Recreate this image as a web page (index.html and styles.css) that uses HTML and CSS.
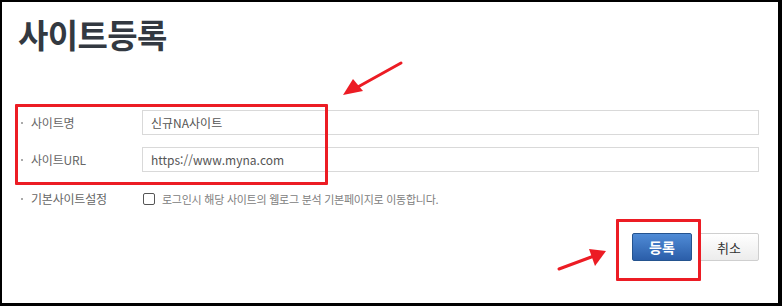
FILE: index.html
```html
<!DOCTYPE html>
<html lang="ko">
<head>
<meta charset="utf-8">
<title>사이트등록</title>
<link rel="stylesheet" href="styles.css">
</head>
<body>
<div class="frame">
  <h1 class="title">사이트등록</h1>
  <div class="form">
    <div class="row">
      <div class="label"><span class="dot"></span>사이트명</div>
      <div class="field"><div class="input">신규NA사이트</div></div>
    </div>
    <div class="row">
      <div class="label"><span class="dot"></span>사이트URL</div>
      <div class="field"><div class="input">https://www.myna.com</div></div>
    </div>
    <div class="row row-check">
      <div class="label"><span class="dot"></span>기본사이트설정</div>
      <div class="field check-field"><span class="checkbox"></span><span class="check-text">로그인시 해당 사이트의 웹로그 분석 기본페이지로 이동합니다.</span></div>
    </div>
  </div>
  <div class="actions">
    <button class="btn btn-primary">등록</button>
    <button class="btn btn-default">취소</button>
  </div>

  <div class="mark mark-form"></div>
  <div class="mark mark-btn"></div>
  <svg class="arrows" width="782" height="306" viewBox="0 0 782 306">
    <line x1="401" y1="63" x2="356" y2="88" stroke="#ec1c24" stroke-width="3" stroke-linecap="round"/>
    <polygon points="343,95 353,79 363,91" fill="#ec1c24"/>
    <line x1="559" y1="269" x2="594" y2="256" stroke="#ec1c24" stroke-width="3" stroke-linecap="round"/>
    <polygon points="606,251 589,249 595,266" fill="#ec1c24"/>
  </svg>
</div>
</body>
</html>
```

FILE: styles.css
```css
* { box-sizing: border-box; }
html, body { margin: 0; padding: 0; background: #fff; }
body { font-family: "Noto Sans CJK KR", "Noto Sans", sans-serif; }

.frame {
  position: relative;
  width: 782px;
  height: 306px;
  border-style: solid;
  border-color: #000;
  border-width: 2px 4px 3px 2px;
  padding: 0 19px 0 18px;
  overflow: hidden;
}

.title {
  margin: 11px 0 0 -2px;
  font-size: 33px;
  line-height: 42px;
  font-weight: 700;
  color: #333941;
  letter-spacing: -0.6px;
}

.form {
  margin-top: 55px;
  display: flex;
  flex-direction: column;
  gap: 12px;
}

.row {
  display: flex;
  align-items: center;
  height: 25px;
}

.row-check { height: 25px; margin-top: 2px; }

.label {
  width: 122px;
  flex: none;
  display: flex;
  align-items: center;
  font-size: 12px;
  color: #666;
  letter-spacing: -0.2px;
}

.dot {
  width: 2px;
  height: 2px;
  background: #aaa;
  margin: 0 8px 0 1px;
  flex: none;
}

.field { flex: 1; }

.input {
  height: 25px;
  border: 1px solid #d9d9d9;
  padding: 0 8px;
  font-size: 12px;
  line-height: 23px;
  color: #555;
}

.check-field {
  display: flex;
  align-items: center;
  gap: 7px;
  padding-left: 1px;
}

.checkbox {
  width: 12px;
  height: 12px;
  border: 1px solid #555;
  border-radius: 2px;
  background: #fff;
  flex: none;
}

.check-text {
  font-size: 11px;
  color: #808080;
  letter-spacing: -0.25px;
}

.actions {
  margin-top: 22px;
  display: flex;
  justify-content: flex-end;
  gap: 7px;
}

.btn {
  width: 60px;
  height: 28px;
  font-family: inherit;
  font-size: 13px;
  padding: 0;
  border-radius: 2px;
  cursor: pointer;
}

.btn-primary {
  color: #fff;
  font-weight: 700;
  font-size: 14px;
  background: linear-gradient(#4f8bd6, #2b5ea9);
  border: 1px solid #24538f;
}

.btn-default {
  color: #333;
  background: linear-gradient(#ffffff, #ececec);
  border: 1px solid #cfcfcf;
}

.mark {
  position: absolute;
  border: 3px solid #ec1c24;
  border-radius: 1px;
  pointer-events: none;
}

.mark-form { left: 13px; top: 102px; width: 313px; height: 81px; }
.mark-btn { left: 614px; top: 217px; width: 85px; height: 62px; }

.arrows {
  position: absolute;
  left: -2px;
  top: -2px;
  pointer-events: none;
}
```
